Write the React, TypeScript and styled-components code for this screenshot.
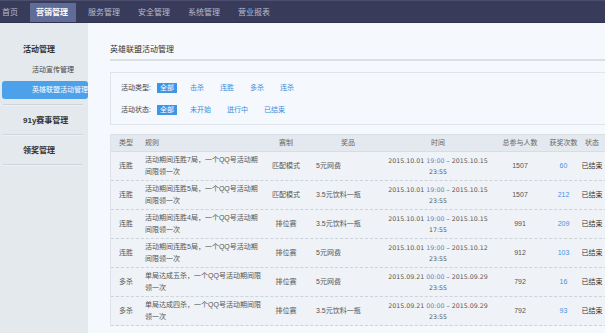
import React from 'react';
import styled, { createGlobalStyle } from 'styled-components';

const Global = createGlobalStyle`
  html, body { margin: 0; padding: 0; background: #f5f8fc; overflow: hidden; }
  body { font-family: "Liberation Sans", "Noto Sans CJK SC", sans-serif; color: #555; }
  * { box-sizing: border-box; }
`;

const Page = styled.div`
  width: 605px;
  height: 333px;
  display: flex;
  flex-direction: column;
  overflow: hidden;
`;

const TopNav = styled.nav`
  height: 23px;
  flex-shrink: 0;
  background: #383b5a;
  border-top: 1px solid #4b4e6d;
  border-bottom: 1px solid #30334f;
  display: flex;
  align-items: flex-end;
  gap: 6px;
`;

const NavItem = styled.a<{ $active?: boolean }>`
  height: 19px;
  line-height: 19px;
  padding: ${p => (p.$active ? '0 8px 0 6px' : '0 6px')};
  font-size: 8px;
  color: ${p => (p.$active ? '#ffffff' : '#b7bbcf')};
  background: ${p => (p.$active ? '#5f6c97' : 'transparent')};
  font-weight: ${p => (p.$active ? 700 : 400)};
  white-space: nowrap;
  &:first-child { padding-left: 2px; }
`;

const Body = styled.div`
  flex: 1;
  display: flex;
  min-height: 0;
`;

const Sidebar = styled.aside`
  width: 88px;
  flex-shrink: 0;
  background: #e4e9ed;
  padding-top: 11px;
  display: flex;
  flex-direction: column;
`;

const Group = styled.div`
  display: flex;
  flex-direction: column;
`;

const GroupTitle = styled.div`
  padding: 9px 0 6px 23px;
  line-height: 14px;
  font-size: 8px;
  font-weight: 700;
  color: #333;
`;

const SubList = styled.div`
  margin-top: -2px;
  padding-bottom: 5px;
  display: flex;
  flex-direction: column;
  gap: 2px;
`;

const SubItem = styled.a<{ $active?: boolean }>`
  height: 18px;
  line-height: 18px;
  margin-left: 2px;
  padding-left: 30px;
  border-radius: 3px;
  font-size: 7px;
  white-space: nowrap;
  color: ${p => (p.$active ? '#ffffff' : '#444')};
  background: ${p => (p.$active ? '#4ca1ea' : 'transparent')};
`;

const Separator = styled.div`
  height: 0;
  margin: 0 5px 0 3px;
  border-top: 1px solid #cfd5da;
  box-shadow: 0 1px 0 #eef1f4;
`;

const Main = styled.main`
  flex: 1;
  min-width: 0;
  padding-left: 22px;
  overflow: hidden;
`;

const Title = styled.h1`
  margin: 0;
  padding: 20px 0 2px;
  line-height: 14px;
  font-size: 8px;
  font-weight: 400;
  color: #333;
  border-bottom: 2px solid #d9dfe5;
`;

const FilterBox = styled.div`
  margin-top: 11px;
  border: 1px solid #dfe5ea;
  border-right: none;
  padding: 10px 0 9px 10px;
  display: flex;
  flex-direction: column;
  gap: 12px;
`;

const FilterRow = styled.div`
  height: 10px;
  display: flex;
  align-items: center;
`;

const FilterLabel = styled.span`
  width: 36px;
  font-size: 7px;
  line-height: 10px;
  color: #444;
  white-space: nowrap;
`;

const Options = styled.div`
  display: flex;
  gap: 10px;
`;

const Option = styled.a<{ $active?: boolean }>`
  height: 10px;
  line-height: 10px;
  padding: 0 3px;
  font-size: 7px;
  white-space: nowrap;
  color: ${p => (p.$active ? '#ffffff' : '#3b8de0')};
  background: ${p => (p.$active ? '#3e95e5' : 'transparent')};
`;

const Table = styled.div`
  margin-top: 9px;
  width: 497px;
  background: #eff3f7;
  border-left: 1px solid #dde3e8;
`;

const cols = '30px 121px 48px 76px 104px 60px 27px 30px';

const HeadRow = styled.div`
  display: grid;
  grid-template-columns: ${cols};
  height: 18px;
  background: #e3e9ee;
  border-top: 1px solid #d8dfe5;
  border-bottom: 1px solid #d6dde3;
`;

const Row = styled.div`
  display: grid;
  grid-template-columns: ${cols};
  height: 29px;
  border-bottom: 1px dashed #ccd3da;
`;

const Cell = styled.div<{ $align?: 'left' | 'center'; $pad?: number; $head?: boolean }>`
  display: flex;
  align-items: center;
  justify-content: ${p => (p.$align === 'left' ? 'flex-start' : 'center')};
  padding-left: ${p => p.$pad ?? 0}px;
  font-size: 7px;
  line-height: 12px;
  white-space: nowrap;
  overflow: visible;
  color: ${p => (p.$head ? '#666' : '#555')};
`;

const RuleText = styled.div`
  font-size: 7px;
  line-height: 12px;
  color: #555;
`;

const TimeText = styled.div`
  font-family: "DejaVu Sans", "Noto Sans CJK SC", sans-serif;
  font-size: 6.3px;
  line-height: 11px;
  text-align: center;
  color: #555;
`;

const Clock = styled.span`
  color: #6580bd;
`;

const Num = styled.span<{ $link?: boolean }>`
  font-size: 7px;
  color: ${p => (p.$link ? '#4a90e2' : '#555')};
`;

const Status = styled.span`
  font-size: 7px;
  color: #333;
`;

type RowData = {
  type: string;
  rule: [string, string];
  mode: string;
  prize: string;
  start: string;
  st: string;
  end: string;
  et: string;
  total: number;
  won: number;
};

const rows: RowData[] = [
  { type: '连胜', rule: ['活动期间连胜7局，一个QQ号活动期', '间限领一次'], mode: '匹配模式', prize: '5元网费', start: '2015.10.01', st: '19:00', end: '2015.10.15', et: '23:55', total: 1507, won: 60 },
  { type: '连胜', rule: ['活动期间连胜5局，一个QQ号活动期', '间限领一次'], mode: '匹配模式', prize: '3.5元饮料一瓶', start: '2015.10.01', st: '19:00', end: '2015.10.15', et: '23:55', total: 1507, won: 212 },
  { type: '连胜', rule: ['活动期间连胜4局，一个QQ号活动期', '间限领一次'], mode: '排位赛', prize: '3.5元饮料一瓶', start: '2015.10.01', st: '19:00', end: '2015.10.15', et: '17:55', total: 991, won: 209 },
  { type: '连胜', rule: ['活动期间连胜5局，一个QQ号活动期', '间限领一次'], mode: '排位赛', prize: '5元网费', start: '2015.10.01', st: '19:00', end: '2015.10.12', et: '23:55', total: 912, won: 103 },
  { type: '多杀', rule: ['单局达成五杀，一个QQ号活动期间限', '领一次'], mode: '排位赛', prize: '5元网费', start: '2015.09.21', st: '00:00', end: '2015.09.29', et: '23:55', total: 792, won: 16 },
  { type: '多杀', rule: ['单局达成四杀，一个QQ号活动期间限', '领一次'], mode: '排位赛', prize: '3.5元饮料一瓶', start: '2015.09.21', st: '00:00', end: '2015.09.29', et: '23:55', total: 792, won: 93 },
];

const navItems = ['首页', '营销管理', '服务管理', '安全管理', '系统管理', '营业报表'];

export default function App() {
  return (
    <Page>
      <Global />
      <TopNav>
        {navItems.map(n => (
          <NavItem key={n} $active={n === '营销管理'}>{n}</NavItem>
        ))}
      </TopNav>
      <Body>
        <Sidebar>
          <Group>
            <GroupTitle>活动管理</GroupTitle>
            <SubList>
              <SubItem>活动宣传管理</SubItem>
              <SubItem $active>英雄联盟活动管理</SubItem>
            </SubList>
          </Group>
          <Separator />
          <Group>
            <GroupTitle>91y赛事管理</GroupTitle>
          </Group>
          <Separator />
          <Group>
            <GroupTitle>领奖管理</GroupTitle>
          </Group>
          <Separator />
        </Sidebar>
        <Main>
          <Title>英雄联盟活动管理</Title>
          <FilterBox>
            <FilterRow>
              <FilterLabel>活动类型:</FilterLabel>
              <Options>
                <Option $active>全部</Option>
                <Option>击杀</Option>
                <Option>连胜</Option>
                <Option>多杀</Option>
                <Option>连杀</Option>
              </Options>
            </FilterRow>
            <FilterRow>
              <FilterLabel>活动状态:</FilterLabel>
              <Options>
                <Option $active>全部</Option>
                <Option>未开始</Option>
                <Option>进行中</Option>
                <Option>已结束</Option>
              </Options>
            </FilterRow>
          </FilterBox>
          <Table>
            <HeadRow>
              <Cell $head>类型</Cell>
              <Cell $head $align="left" $pad={4}>规则</Cell>
              <Cell $head>赛制</Cell>
              <Cell $head>奖品</Cell>
              <Cell $head>时间</Cell>
              <Cell $head>总参与人数</Cell>
              <Cell $head>获奖次数</Cell>
              <Cell $head>状态</Cell>
            </HeadRow>
            {rows.map((r, i) => (
              <Row key={i}>
                <Cell>{r.type}</Cell>
                <Cell $align="left" $pad={4}>
                  <RuleText>{r.rule[0]}<br />{r.rule[1]}</RuleText>
                </Cell>
                <Cell>{r.mode}</Cell>
                <Cell $align="left" $pad={6}>{r.prize}</Cell>
                <Cell>
                  <TimeText>
                    {r.start} <Clock>{r.st}</Clock> – {r.end}<br />{r.et}
                  </TimeText>
                </Cell>
                <Cell><Num>{r.total}</Num></Cell>
                <Cell><Num $link>{r.won}</Num></Cell>
                <Cell><Status>已结束</Status></Cell>
              </Row>
            ))}
          </Table>
        </Main>
      </Body>
    </Page>
  );
}
